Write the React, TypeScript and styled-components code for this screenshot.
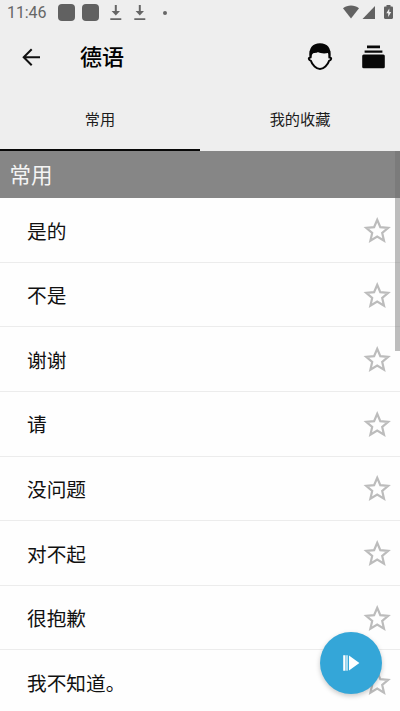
import React from "react";
import styled, { createGlobalStyle } from "styled-components";

const GlobalStyle = createGlobalStyle`
  * { box-sizing: border-box; }
  body {
    margin: 0;
    overflow: hidden;
    background: #fefefe;
    color: #111;
    font-family: Roboto, "Noto Sans CJK SC", sans-serif;
  }
  svg { display: block; flex: none; }
`;

const Screen = styled.div`
  position: relative;
  display: flex;
  flex-direction: column;
  width: 400px;
  height: 711px;
  overflow: hidden;
`;

const Header = styled.header`
  flex: none;
  height: 151px;
  background: #eeeeee;
`;

const StatusBar = styled.div`
  display: flex;
  justify-content: space-between;
  height: 25px;
  padding: 0 7px 0 7px;
  color: #666;
`;

const StatusGroup = styled.div`
  display: flex;
  align-items: center;
`;

const Clock = styled.span`
  width: 50.5px;
  font-size: 16px;
  line-height: 26px;
  letter-spacing: -0.1px;
  padding-top: 1px;
`;

const NoticeBlock = styled.span`
  width: 17px;
  height: 17px;
  margin-right: 7px;
  border-radius: 4px;
  background: #616161;
`;

const NoticeDot = styled.span`
  width: 4px;
  height: 4px;
  margin-left: 9px;
  border-radius: 50%;
  background: #666;
`;

const Toolbar = styled.div`
  display: flex;
  align-items: center;
  height: 63px;
  padding: 0 13px 0 18px;
`;

const Title = styled.h1`
  flex: 1;
  margin: 2px 0 0 36px;
  font-size: 22px;
  line-height: 30px;
  font-weight: 500;
  color: #000;
`;

const Actions = styled.div`
  display: flex;
  align-items: center;
  gap: 27px;
`;

const Tabs = styled.nav`
  display: grid;
  grid-template-columns: 1fr 1fr;
  height: 63px;
`;

const Tab = styled.button<{ $active?: boolean }>`
  padding: 2px 0 0;
  border: 0;
  border-bottom: 2px solid ${(p) => (p.$active ? "#080808" : "transparent")};
  background: none;
  font: inherit;
  font-size: 15.2px;
  line-height: 22px;
  color: #1c1c1c;
`;

const SectionTitle = styled.h2`
  flex: none;
  height: 47.3px;
  margin: 0;
  padding-left: 9.5px;
  background: #868686;
  color: #f4f4f4;
  font-size: 21.5px;
  line-height: 49px;
  font-weight: 400;
`;

const List = styled.ul`
  margin: 0;
  padding: 0;
  list-style: none;
`;

const Row = styled.li`
  display: flex;
  align-items: center;
  justify-content: space-between;
  height: 64.6px;
  padding: 0 7px 0 27px;
  border-bottom: 1px solid #ececec;
  font-size: 19.7px;
`;

const ScrollThumb = styled.div`
  position: absolute;
  top: 151px;
  right: 0;
  width: 5px;
  height: 200px;
  background: rgba(110, 110, 110, 0.45);
`;

const PlayButton = styled.button`
  position: absolute;
  left: 320px;
  top: 632px;
  display: flex;
  align-items: center;
  justify-content: center;
  width: 62px;
  height: 62px;
  padding: 0;
  border: 0;
  border-radius: 50%;
  background: #34a6d8;
  box-shadow: 0 2px 5px rgba(0, 0, 0, 0.22);
`;

const Download = () => (
  <svg width="24" height="25" viewBox="0 0 24 25" fill="#666">
    <path d="M8.800 5h2v6h3.200l-4.200 4.500L5.600 11h3.200zM4.300 18.200h11v1.700h-11z" />
  </svg>
);

const Star = () => (
  <svg width="32" height="32" viewBox="0 0 32 32" fill="none" stroke="#bcbcbc" strokeWidth="2.200">
    <path d="M16.200 5.800l3.100 7.300 7.900.700-6 5.200 1.800 7.700-6.800-4.100-6.800 4.100 1.800-7.700-6-5.200 7.900-.700z" />
  </svg>
);

const phrases = ["是的", "不是", "谢谢", "请", "没问题", "对不起", "很抱歉", "我不知道。"];

export default function App() {
  return (
    <Screen>
      <GlobalStyle />
      <Header>
        <StatusBar>
          <StatusGroup>
            <Clock>11:46</Clock>
            <NoticeBlock />
            <NoticeBlock />
            <Download />
            <Download />
            <NoticeDot />
          </StatusGroup>
          <StatusGroup>
            <svg width="52" height="25" viewBox="0 0 52 25" fill="#626262">
              <path d="M2 8.200C6.500 4.600 13.500 4.600 18 8.200L10 18.600z" />
              <path d="M34 6v13H21.500z" />
              <path
                transform="translate(2)"
                fillRule="evenodd"
                d="M43.500 5v1.500h-1.300c-.700 0-1.200.500-1.200 1.200v10.100c0 .700.500 1.200 1.200 1.200h6.600c.700 0 1.200-.500 1.200-1.200V7.700c0-.700-.500-1.200-1.200-1.200h-1.300V5zM46.300 8.500l-3 4.800h1.900V17l3-5h-1.900z"
              />
            </svg>
          </StatusGroup>
        </StatusBar>
        <Toolbar>
          <svg width="26" height="24" viewBox="0 0 26 24" fill="none" stroke="#111" strokeWidth="2">
            <path d="M22 12.200H6M13.700 4.200l-8 8 8 8" />
          </svg>
          <Title>德语</Title>
          <Actions>
            <svg width="26" height="28" viewBox="0 0 26 28">
              <path
                d="M3.600 14.600c-1.500-.100-2.300.500-1.500 1.900.400.700 1 1 1.700 1.100C5.200 22 9.500 26 13 26s7.800-4 9.200-8.400c.700-.100 1.300-.400 1.700-1.100.800-1.400 0-2-1.500-1.900V8.300H3.600z"
                fill="#f2f2f2"
                stroke="#050505"
                strokeWidth="1.900"
                strokeLinejoin="round"
              />
              <path
                d="M2.600 14.500C1.600 5 5.400.300 13 .300S24.400 5 23.400 14.500h-1.700c.200-2.300-.100-3.700-.800-4.400-3.500.600-7.700.500-10-1.300-1.200 1.100-2.500 1.300-4.200 1.100-1.500 1-2.400 2.300-2.400 4.600z"
                fill="#050505"
              />
            </svg>
            <svg width="27" height="28" viewBox="0 0 27 28" fill="#080808">
              <path d="M7 2.600h13v2.600H7zM4.600 7.400h17.800v2.300H4.600z" />
              <rect x="2.200" y="11.600" width="22.600" height="13.600" rx="1.500" />
            </svg>
          </Actions>
        </Toolbar>
        <Tabs>
          <Tab $active>常用</Tab>
          <Tab>我的收藏</Tab>
        </Tabs>
      </Header>
      <SectionTitle>常用</SectionTitle>
      <List>
        {phrases.map((phrase) => (
          <Row key={phrase}>
            <span>{phrase}</span>
            <Star />
          </Row>
        ))}
      </List>
      <ScrollThumb />
      <PlayButton aria-label="播放">
        <svg width="18" height="18" viewBox="0 0 18 18" fill="#fff">
          <path d="M1.200 1.200h2.300v15.600H1.200zM4.400 1.200h1.200v15.600H4.400zM7 1.400L17.400 9 7 16.600z" />
        </svg>
      </PlayButton>
    </Screen>
  );
}
